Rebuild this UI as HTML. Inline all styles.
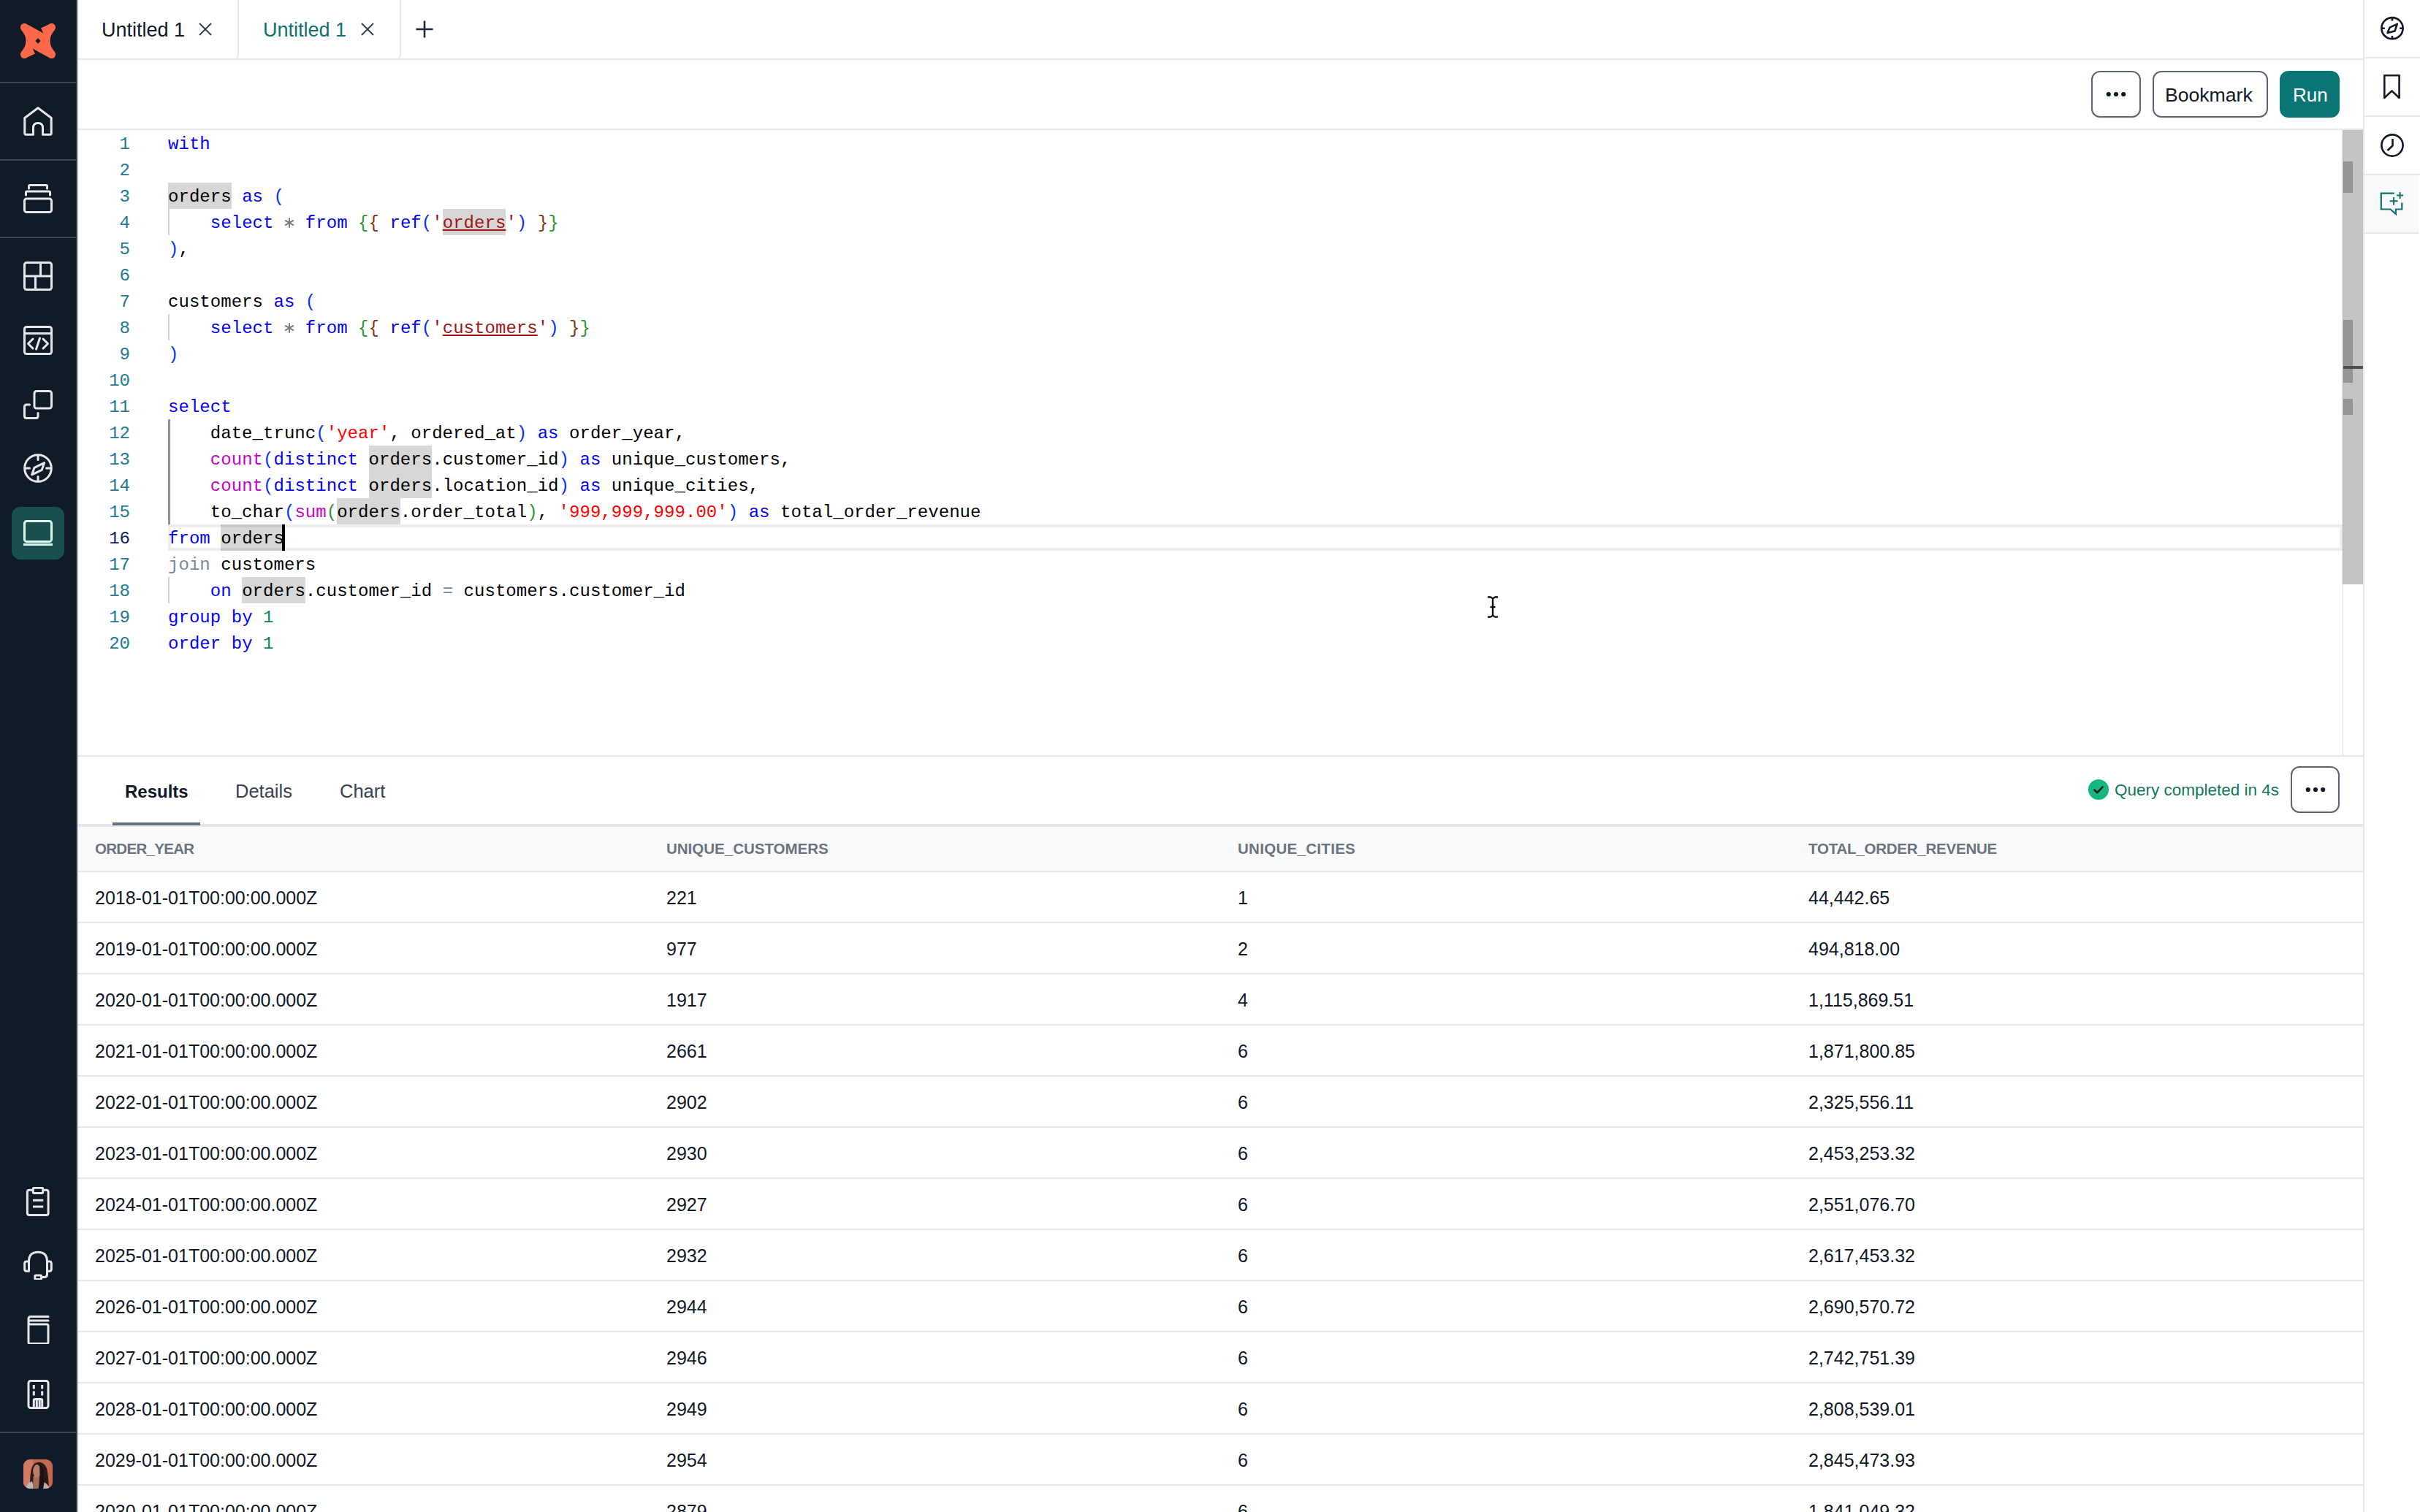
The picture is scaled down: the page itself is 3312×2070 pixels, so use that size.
<!DOCTYPE html>
<html><head><meta charset="utf-8">
<style>
*{box-sizing:border-box;margin:0;padding:0}
html,body{width:3312px;height:2070px;overflow:hidden;background:#fff;font-family:"Liberation Sans",sans-serif;position:relative}
.abs{position:absolute}
/* left sidebar */
#sb{position:absolute;left:0;top:0;width:106px;height:2070px;background:#111a27;border-right:2px solid #343f4e}
.sdiv{position:absolute;left:0;width:104px;height:2px;background:#3d4654}
.sico{position:absolute;left:32px;width:40px;height:40px}
/* top tabs */
#tabs{position:absolute;left:106px;top:0;width:3129px;height:82px;border-bottom:2px solid #e5e7eb}
.tab{position:absolute;top:0;height:82px;border-right:2px solid #e5e7eb;border-bottom-right-radius:8px}
.tabt{position:absolute;top:24px;font-size:27px;line-height:34px;white-space:nowrap}
/* toolbar */
#tool{position:absolute;left:106px;top:82px;width:3129px;height:96px;border-bottom:2px solid #e5e7eb}
.btn{position:absolute;top:15px;height:64px;border:2px solid #5b6472;border-radius:12px;background:#fff}
/* editor */
#ed{position:absolute;left:106px;top:178px;width:3129px;height:858px;border-bottom:2px solid #e5e7eb;overflow:hidden}
.ln{position:absolute;margin-top:2px;left:0;width:72px;text-align:right;font-family:"Liberation Mono",monospace;font-size:24px;line-height:36px;color:#237893}
.cl{position:absolute;margin-top:2px;left:124px;font-family:"Liberation Mono",monospace;font-size:24px;line-height:36px;color:#000;white-space:pre;letter-spacing:0.044px}
/* right sidebar */
#rsb{position:absolute;left:3234px;top:0;width:78px;height:2070px;border-left:2px solid #e5e7eb;background:#fff}
.rdiv{position:absolute;left:0;width:77px;height:2px;background:#e5e7eb}
/* results */
#rtabs{position:absolute;left:106px;top:1036px;width:3129px;height:96px;border-bottom:4px solid #e5e7eb}
.rt{position:absolute;top:32px;font-size:25.5px;line-height:30px;color:#394150;white-space:nowrap}
#table{position:absolute;left:106px;top:1132px;width:3129px;height:940px}
.th{position:absolute;top:0;left:0;width:3129px;height:62px;background:#f9fafb;border-bottom:2px solid #e5e7eb}
.row{position:absolute;left:0;width:3129px;height:70px;border-bottom:2px solid #e5e7eb}
.c{position:absolute;white-space:nowrap}
.hc{top:18px;font-size:20.5px;line-height:24px;font-weight:bold;color:#6b7280}
.dc{top:20px;font-size:25px;line-height:30px;color:#101828}
.k{color:#0000ff}.p1{color:#0431fa}.p2{color:#319331}.p3{color:#7b3814}.s{color:#ff0000}.sr{color:#a31515}.f{color:#c700c7}.o{color:#778899}.ast{color:transparent}.n{color:#098658}
.hlb{position:absolute;width:86.7px;height:36px;background:#d7d7d7}.ul{text-decoration:underline;text-decoration-color:#a31515;text-decoration-thickness:2px;text-underline-offset:2px}
.ln.act{color:#0b216f}
.curline{position:absolute;left:124px;top:540px;width:2976px;height:36px;border:4px solid rgba(0,0,0,0.067)}
.guide{position:absolute;left:124px;width:2px;background:#d3d3d3}
.guide.act{background:#939393;width:3px}
.caret{position:absolute;left:280px;top:540px;width:4px;height:36px;background:#000}
#vsb{position:absolute;left:3100px;top:0;width:28px;height:622px;background:#c4c4c4;border-left:1px solid #a9a9a9}
.mk{position:absolute;left:0;width:13px;background:#959595}
#vline{position:absolute;left:3100px;top:622px;width:1px;height:234px;background:#d9d9d9}
</style></head>
<body>
<div id="sb">
<svg class="abs" style="left:28px;top:32px" width="48" height="48" viewBox="0 0 48 48"><path fill="#ff694a" fill-rule="evenodd" d="M9.4 1.6L31.4 13.6L28 6.4L38.6 1.6A5.5 5.5 0 0 1 46.4 9.4Q34.5 24 46.4 38.6A5.5 5.5 0 0 1 38.6 46.4L16.6 34.4L20 41.6L9.4 46.4A5.5 5.5 0 0 1 1.6 38.6Q13.5 24 1.6 9.4A5.5 5.5 0 0 1 9.4 1.6Z M24 20.3L27.7 24L24 27.7L20.3 24Z"/></svg>
<div class="sdiv" style="top:112px"></div>
<div class="sdiv" style="top:218px"></div>
<div class="sdiv" style="top:324px"></div>
<svg class="sico" style="top:146px" viewBox="0 0 40 40"><path stroke="#e5e7eb" stroke-width="3" fill="none" stroke-linejoin="round" stroke-linecap="round" d="M20 1.8L38.2 15.5V36.5Q38.2 38.2 36.5 38.2H26.5V29Q26.5 22.5 20 22.5Q13.5 22.5 13.5 29V38.2H3.5Q1.8 38.2 1.8 36.5V15.5Z"/></svg>
<svg class="sico" style="top:252px" viewBox="0 0 40 40"><path stroke="#e5e7eb" stroke-width="3" fill="none" stroke-linejoin="round" stroke-linecap="round" d="M7.5 6V3Q7.5 1.5 9 1.5H31Q32.5 1.5 32.5 3V6M3.5 15V11.5Q3.5 10 5 10H35Q36.5 10 36.5 11.5V15"/><rect x="1.5" y="20" width="37" height="18.5" rx="3" stroke="#e5e7eb" stroke-width="3" fill="none" stroke-linejoin="round" stroke-linecap="round"/></svg>
<svg class="sico" style="top:358px" viewBox="0 0 40 40"><rect x="1.5" y="1.5" width="37" height="37" rx="3" stroke="#e5e7eb" stroke-width="3" fill="none" stroke-linejoin="round" stroke-linecap="round"/><path stroke="#e5e7eb" stroke-width="3" fill="none" stroke-linejoin="round" stroke-linecap="round" d="M1.5 20H38.5M23.5 1.5V20M16.5 20V38.5"/></svg>
<svg class="sico" style="top:446px" viewBox="0 0 40 40"><rect x="1.5" y="1.5" width="37" height="37" rx="3" stroke="#e5e7eb" stroke-width="3" fill="none" stroke-linejoin="round" stroke-linecap="round"/><path stroke="#e5e7eb" stroke-width="3" fill="none" stroke-linejoin="round" stroke-linecap="round" d="M1.5 10.5H38.5M13 18L6.5 24.5L13 31M27 18L33.5 24.5L27 31M22.5 17L17.5 32"/></svg>
<svg class="sico" style="top:534px" viewBox="0 0 40 40"><rect x="15" y="1.5" width="23.5" height="23.5" rx="3" stroke="#e5e7eb" stroke-width="3" fill="none" stroke-linejoin="round" stroke-linecap="round"/><path stroke="#e5e7eb" stroke-width="3" fill="none" stroke-linejoin="round" stroke-linecap="round" d="M8.5 20H4.5Q1.5 20 1.5 23V35.5Q1.5 38.5 4.5 38.5H17Q20 38.5 20 35.5V31.5"/></svg>
<svg class="sico" style="top:621px" viewBox="0 0 40 40"><circle cx="20" cy="20" r="18.3" stroke="#e5e7eb" stroke-width="3" fill="none" stroke-linejoin="round" stroke-linecap="round"/><path stroke="#e5e7eb" stroke-width="3" fill="none" stroke-linejoin="round" stroke-linecap="round" d="M20 3.5V8.5M20 31.5V36.5M3.5 20H8.5M31.5 20H36.5"/><path stroke="#e5e7eb" stroke-width="3" fill="none" stroke-linejoin="round" stroke-linecap="round" d="M11.7 28.8L15 19.3L28.6 12.6L25.3 22.3Z"/></svg>
<div class="abs" style="left:16px;top:694px;width:72px;height:72px;border-radius:12px;background:#1a4f50"></div>
<svg class="sico" style="top:709px" viewBox="0 0 40 40"><rect x="1.5" y="4.5" width="37" height="28" rx="3" stroke="#dcfcf2" stroke-width="3" fill="none"/><path d="M0 36.5H40" stroke="#dcfcf2" stroke-width="3"/></svg>
<svg class="sico" style="top:1625px" viewBox="0 0 40 40"><path stroke="#e5e7eb" stroke-width="3" fill="none" stroke-linejoin="round" stroke-linecap="round" d="M11.5 4.3H8.2Q5.4 4.3 5.4 7.1V35.7Q5.4 38.5 8.2 38.5H31.3Q34.1 38.5 34.1 35.7V7.1Q34.1 4.3 31.3 4.3H28"/><rect x="13.3" y="1.3" width="13.4" height="7.1" rx="1.5" stroke="#e5e7eb" stroke-width="3" fill="none" stroke-linejoin="round" stroke-linecap="round"/><path stroke="#e5e7eb" stroke-width="3" fill="none" d="M13 18.3H27.2M13 27.1H27.2"/></svg>
<svg class="sico" style="top:1712px" viewBox="0 0 40 40"><path stroke="#e5e7eb" stroke-width="3" fill="none" stroke-linejoin="round" stroke-linecap="round" d="M7.5 15Q7.5 2.2 20 2.2Q32.5 2.2 32.5 15V33Q32.5 36.6 28.5 36.6H24.6"/><path stroke="#e5e7eb" stroke-width="3" fill="none" stroke-linejoin="round" stroke-linecap="round" d="M7.5 14.9H4.5Q1.7 14.9 1.7 17.7V25.5Q1.7 28.3 4.5 28.3H7.5Z M32.5 14.9H35.5Q38.3 14.9 38.3 17.7V25.5Q38.3 28.3 35.5 28.3H32.5Z"/><rect x="15.8" y="33.9" width="8.8" height="5.5" rx="1.2" stroke="#e5e7eb" stroke-width="3" fill="none" stroke-linejoin="round" stroke-linecap="round"/></svg>
<svg class="sico" style="top:1800px" viewBox="0 0 40 40"><path stroke="#e5e7eb" stroke-width="3" fill="none" stroke-linejoin="round" stroke-linecap="round" d="M34 2.5H10Q7 2.5 7 5.5V37.5Q7 39.5 9.5 39.5H31.5Q34 39.5 34 37.5V15Q34 13 32 13H9.5Q7 13 7 10.5Q7 8 9.5 8H34"/></svg>
<svg class="sico" style="top:1889px" viewBox="0 0 40 40"><rect x="7" y="1.5" width="27" height="37" rx="3" stroke="#e5e7eb" stroke-width="3" fill="none" stroke-linejoin="round" stroke-linecap="round"/><path stroke="#e5e7eb" stroke-width="3" fill="none" d="M14.3 7V12.5M25.7 7V12.5M14.3 15.5V21.5M25.7 15.5V21.5"/><path stroke="#e5e7eb" stroke-width="3" fill="none" stroke-linejoin="round" stroke-linecap="round" d="M14.3 38.5V28Q14.3 26.5 15.8 26.5H24.2Q25.7 26.5 25.7 28V38.5M18.3 27V38.5M22.2 27V38.5"/></svg>
<div class="sdiv" style="top:1960px"></div>
<svg class="abs" style="left:32px;top:1998px" width="40" height="40" viewBox="0 0 40 40"><defs><clipPath id="av"><rect width="40" height="40" rx="9"/></clipPath></defs><g clip-path="url(#av)"><rect width="40" height="40" fill="#c66850"/><rect x="0" y="0" width="13" height="40" fill="#d47a64"/><path d="M9.5 40Q8 22 12 10Q16 3 22 3.8Q30 5 32.5 14Q34.5 26 35 40Z" fill="#2a1916"/><path d="M3 40Q5 32 12 30L14.5 40Z" fill="#b9b9b9"/><path d="M24 40L26 31Q33 32 36 40Z" fill="#b3b3b3"/><path d="M13.5 23L22 23L21 40L13 40Z" fill="#a66d5b"/><ellipse cx="18.5" cy="16" rx="5.4" ry="9" fill="#b97c69"/><path d="M22 7Q29 11 28 23Q29 34 27 40L20.5 40Q24.5 30 22.5 20Z" fill="#1e1312"/></g></svg>
</div>
<div id="tabs">
<div class="tab" style="left:0;width:221px"><div class="tabt" style="left:33px;color:#111827">Untitled 1</div>
<svg class="abs" style="left:164px;top:29px" width="22" height="22" viewBox="0 0 22 22"><path d="M3 3L19 19M19 3L3 19" stroke="#374151" stroke-width="2" fill="none"/></svg></div>
<div class="tab" style="left:221px;width:222px"><div class="tabt" style="left:33px;color:#0f6f73">Untitled 1</div>
<svg class="abs" style="left:165px;top:29px" width="22" height="22" viewBox="0 0 22 22"><path d="M3 3L19 19M19 3L3 19" stroke="#374151" stroke-width="2" fill="none"/></svg></div>
<svg class="abs" style="left:462px;top:27px" width="26" height="26" viewBox="0 0 26 26"><path d="M13 1.5V24.5M1.5 13H24.5" stroke="#1f2937" stroke-width="2.6" fill="none"/></svg>
</div>
<div id="tool">
<div class="btn" style="left:2756px;width:68px"><svg class="abs" style="left:18px;top:24px" width="28" height="12" viewBox="0 0 28 12"><circle cx="3.8" cy="6" r="3.1" fill="#111827"/><circle cx="14" cy="6" r="3.1" fill="#111827"/><circle cx="24.2" cy="6" r="3.1" fill="#111827"/></svg></div>
<div class="btn" style="left:2840px;width:158px"><div class="abs" style="left:15px;top:15.5px;font-size:26.6px;line-height:30px;color:#111827">Bookmark</div></div>
<div class="btn" style="left:3014px;width:82px;background:#0b7477;border-color:#0b7477"><div class="abs" style="left:16px;top:16px;font-size:26px;line-height:30px;color:#fff">Run</div></div>
</div>
<div id="ed">
<div class="hlb" style="left:124.0px;top:72px"></div><div class="hlb" style="left:499.7px;top:108px"></div><div class="hlb" style="left:398.6px;top:432px"></div><div class="hlb" style="left:398.6px;top:468px"></div><div class="hlb" style="left:355.2px;top:504px"></div><div class="hlb" style="left:196.2px;top:540px"></div><div class="hlb" style="left:225.1px;top:612px"></div>
<div class="guide" style="top:108px;height:36px"></div>
<div class="guide" style="top:252px;height:36px"></div>
<div class="guide act" style="top:396px;height:144px"></div>
<div class="guide" style="top:612px;height:36px"></div>
<div class="ln" style="top:0px">1</div>
<div class="ln" style="top:36px">2</div>
<div class="ln" style="top:72px">3</div>
<div class="ln" style="top:108px">4</div>
<div class="ln" style="top:144px">5</div>
<div class="ln" style="top:180px">6</div>
<div class="ln" style="top:216px">7</div>
<div class="ln" style="top:252px">8</div>
<div class="ln" style="top:288px">9</div>
<div class="ln" style="top:324px">10</div>
<div class="ln" style="top:360px">11</div>
<div class="ln" style="top:396px">12</div>
<div class="ln" style="top:432px">13</div>
<div class="ln" style="top:468px">14</div>
<div class="ln" style="top:504px">15</div>
<div class="ln act" style="top:540px">16</div>
<div class="ln" style="top:576px">17</div>
<div class="ln" style="top:612px">18</div>
<div class="ln" style="top:648px">19</div>
<div class="ln" style="top:684px">20</div>
<div class="cl" style="top:0px"><span class="k">with</span></div>
<div class="cl" style="top:72px">orders <span class="k">as</span> <span class="p1">(</span></div>
<div class="cl" style="top:108px">    <span class="k">select</span> <span class="o ast">*</span> <span class="k">from</span> <span class="p2">{</span><span class="p3">{</span> <span class="k">ref</span><span class="p1">(</span><span class="sr">'</span><span class="sr ul">orders</span><span class="sr">'</span><span class="p1">)</span> <span class="p3">}</span><span class="p2">}</span></div>
<div class="cl" style="top:144px"><span class="p1">)</span>,</div>
<div class="cl" style="top:216px">customers <span class="k">as</span> <span class="p1">(</span></div>
<div class="cl" style="top:252px">    <span class="k">select</span> <span class="o ast">*</span> <span class="k">from</span> <span class="p2">{</span><span class="p3">{</span> <span class="k">ref</span><span class="p1">(</span><span class="sr">'</span><span class="sr ul">customers</span><span class="sr">'</span><span class="p1">)</span> <span class="p3">}</span><span class="p2">}</span></div>
<div class="cl" style="top:288px"><span class="p1">)</span></div>
<div class="cl" style="top:360px"><span class="k">select</span></div>
<div class="cl" style="top:396px">    date_trunc<span class="p1">(</span><span class="s">'year'</span>, ordered_at<span class="p1">)</span> <span class="k">as</span> order_year,</div>
<div class="cl" style="top:432px">    <span class="f">count</span><span class="p1">(</span><span class="k">distinct</span> orders.customer_id<span class="p1">)</span> <span class="k">as</span> unique_customers,</div>
<div class="cl" style="top:468px">    <span class="f">count</span><span class="p1">(</span><span class="k">distinct</span> orders.location_id<span class="p1">)</span> <span class="k">as</span> unique_cities,</div>
<div class="cl" style="top:504px">    to_char<span class="p1">(</span><span class="f">sum</span><span class="p2">(</span>orders.order_total<span class="p2">)</span>, <span class="s">'999,999,999.00'</span><span class="p1">)</span> <span class="k">as</span> total_order_revenue</div>
<div class="cl" style="top:540px"><span class="k">from</span> orders</div>
<div class="cl" style="top:576px"><span class="o">join</span> customers</div>
<div class="cl" style="top:612px">    <span class="k">on</span> orders.customer_id <span class="o">=</span> customers.customer_id</div>
<div class="cl" style="top:648px"><span class="k">group</span> <span class="k">by</span> <span class="n">1</span></div>
<div class="cl" style="top:684px"><span class="k">order</span> <span class="k">by</span> <span class="n">1</span></div>
<div class="curline"></div>
<svg class="abs" style="left:282.3px;top:118.5px" width="16" height="16" viewBox="0 0 16 16"><path d="M8 1.2V14.8M2.1 4.6L13.9 11.4M2.1 11.4L13.9 4.6" stroke="#6f7b89" stroke-width="1.9" fill="none"/></svg><svg class="abs" style="left:282.3px;top:262.5px" width="16" height="16" viewBox="0 0 16 16"><path d="M8 1.2V14.8M2.1 4.6L13.9 11.4M2.1 11.4L13.9 4.6" stroke="#6f7b89" stroke-width="1.9" fill="none"/></svg>
<div class="caret"></div>
<div id="vsb"><div class="mk" style="top:43px;height:43px"></div><div class="mk" style="top:260px;height:86px"></div><div class="abs" style="left:0;top:323px;width:27px;height:4px;background:#4f4f4f"></div><div class="mk" style="top:368px;height:22px"></div></div><div id="vline"></div>
<svg class="abs" style="left:1929px;top:636px" width="16" height="34" viewBox="0 0 16 34"><path d="M2 3.5Q5 2.5 8 5.5Q11 2.5 14 3.5M8 5.5V28.5M2 30.5Q5 31.5 8 28.5Q11 31.5 14 30.5M5.5 17H10.5" stroke="#111" stroke-width="2.4" fill="none" stroke-linecap="round"/></svg>
</div>
<div id="rtabs">
<div class="rt" style="left:65px;top:33px;font-weight:bold;color:#111827;font-size:24px">Results</div>
<div class="rt" style="left:216px">Details</div>
<div class="rt" style="left:359px">Chart</div>
<div class="abs" style="left:48px;top:90px;width:120px;height:4px;background:#667080"></div>
<svg class="abs" style="left:2752px;top:31px" width="28" height="28" viewBox="0 0 28 28"><circle cx="14" cy="14" r="14" fill="#16b67f"/><path d="M8.5 14.5L12.3 18.2L19.5 10.5" stroke="#111827" stroke-width="2.6" fill="none" stroke-linecap="round" stroke-linejoin="round"/></svg>
<div class="abs" style="left:2788px;top:33px;font-size:22.5px;line-height:26px;color:#127759;white-space:nowrap">Query completed in 4s</div>
<div class="btn" style="left:3029px;top:13px;width:67px"><svg class="abs" style="left:18px;top:24px" width="28" height="12" viewBox="0 0 28 12"><circle cx="3.8" cy="6" r="3.1" fill="#111827"/><circle cx="14" cy="6" r="3.1" fill="#111827"/><circle cx="24.2" cy="6" r="3.1" fill="#111827"/></svg></div>
</div>
<div id="table">
<div class="th"><div class="c hc" style="left:24px;letter-spacing:-0.7px">ORDER_YEAR</div><div class="c hc" style="left:806px">UNIQUE_CUSTOMERS</div><div class="c hc" style="left:1588px;letter-spacing:0.3px">UNIQUE_CITIES</div><div class="c hc" style="left:2369px;letter-spacing:-0.23px">TOTAL_ORDER_REVENUE</div></div>
<div class="row" style="top:62px"><div class="c dc" style="left:24px">2018-01-01T00:00:00.000Z</div><div class="c dc" style="left:806px">221</div><div class="c dc" style="left:1588px">1</div><div class="c dc" style="left:2369px">44,442.65</div></div>
<div class="row" style="top:132px"><div class="c dc" style="left:24px">2019-01-01T00:00:00.000Z</div><div class="c dc" style="left:806px">977</div><div class="c dc" style="left:1588px">2</div><div class="c dc" style="left:2369px">494,818.00</div></div>
<div class="row" style="top:202px"><div class="c dc" style="left:24px">2020-01-01T00:00:00.000Z</div><div class="c dc" style="left:806px">1917</div><div class="c dc" style="left:1588px">4</div><div class="c dc" style="left:2369px">1,115,869.51</div></div>
<div class="row" style="top:272px"><div class="c dc" style="left:24px">2021-01-01T00:00:00.000Z</div><div class="c dc" style="left:806px">2661</div><div class="c dc" style="left:1588px">6</div><div class="c dc" style="left:2369px">1,871,800.85</div></div>
<div class="row" style="top:342px"><div class="c dc" style="left:24px">2022-01-01T00:00:00.000Z</div><div class="c dc" style="left:806px">2902</div><div class="c dc" style="left:1588px">6</div><div class="c dc" style="left:2369px">2,325,556.11</div></div>
<div class="row" style="top:412px"><div class="c dc" style="left:24px">2023-01-01T00:00:00.000Z</div><div class="c dc" style="left:806px">2930</div><div class="c dc" style="left:1588px">6</div><div class="c dc" style="left:2369px">2,453,253.32</div></div>
<div class="row" style="top:482px"><div class="c dc" style="left:24px">2024-01-01T00:00:00.000Z</div><div class="c dc" style="left:806px">2927</div><div class="c dc" style="left:1588px">6</div><div class="c dc" style="left:2369px">2,551,076.70</div></div>
<div class="row" style="top:552px"><div class="c dc" style="left:24px">2025-01-01T00:00:00.000Z</div><div class="c dc" style="left:806px">2932</div><div class="c dc" style="left:1588px">6</div><div class="c dc" style="left:2369px">2,617,453.32</div></div>
<div class="row" style="top:622px"><div class="c dc" style="left:24px">2026-01-01T00:00:00.000Z</div><div class="c dc" style="left:806px">2944</div><div class="c dc" style="left:1588px">6</div><div class="c dc" style="left:2369px">2,690,570.72</div></div>
<div class="row" style="top:692px"><div class="c dc" style="left:24px">2027-01-01T00:00:00.000Z</div><div class="c dc" style="left:806px">2946</div><div class="c dc" style="left:1588px">6</div><div class="c dc" style="left:2369px">2,742,751.39</div></div>
<div class="row" style="top:762px"><div class="c dc" style="left:24px">2028-01-01T00:00:00.000Z</div><div class="c dc" style="left:806px">2949</div><div class="c dc" style="left:1588px">6</div><div class="c dc" style="left:2369px">2,808,539.01</div></div>
<div class="row" style="top:832px"><div class="c dc" style="left:24px">2029-01-01T00:00:00.000Z</div><div class="c dc" style="left:806px">2954</div><div class="c dc" style="left:1588px">6</div><div class="c dc" style="left:2369px">2,845,473.93</div></div>
<div class="row" style="top:902px"><div class="c dc" style="left:24px">2030-01-01T00:00:00.000Z</div><div class="c dc" style="left:806px">2879</div><div class="c dc" style="left:1588px">6</div><div class="c dc" style="left:2369px">1,841,049.32</div></div>
</div>
<div id="rsb">
<div class="rdiv" style="top:78px"></div>
<div class="rdiv" style="top:158px"></div>
<div class="rdiv" style="top:238px"></div>
<div class="abs" style="left:0;top:240px;width:74px;height:80px;background:#f9fafb;border-bottom:2px solid #e5e7eb"></div>
<svg class="abs" style="left:20px;top:21px" width="36" height="36" viewBox="0 0 36 36"><circle cx="18" cy="17.7" r="14.6" stroke="#111827" stroke-width="2.6" fill="none" stroke-linejoin="round"/><path stroke="#111827" stroke-width="2.6" fill="none" stroke-linejoin="round" d="M18 3V7.5M18 28V32.5M3.3 17.7H7.8M28.2 17.7H32.7"/><path stroke="#111827" stroke-width="2.6" fill="none" stroke-linejoin="round" d="M11.5 24L14.7 16.6L24.8 11.8L21.6 21.4Z"/></svg>
<svg class="abs" style="left:24px;top:101px" width="28" height="36" viewBox="0 0 28 36"><path stroke="#111827" stroke-width="2.6" fill="none" stroke-linejoin="round" d="M3.3 2.3H23.6V33L13.45 23.4L3.3 33Z"/></svg>
<svg class="abs" style="left:20px;top:181px" width="36" height="36" viewBox="0 0 36 36"><circle cx="18" cy="18" r="14.6" stroke="#111827" stroke-width="2.6" fill="none" stroke-linejoin="round"/><path stroke="#111827" stroke-width="2.6" fill="none" stroke-linejoin="round" d="M18.5 9V18.5L11.5 25"/></svg>
<svg class="abs" style="left:19px;top:258px" width="38" height="40" viewBox="0 0 38 40"><path stroke="#0f6f73" stroke-width="2.2" fill="none" d="M21.7 6.7H3.8V28.5H16.5L23.9 35V28.5H32.3V19.5"/><path stroke="#0f6f73" stroke-width="2" fill="none" d="M21.1 11.9V22.7M15.7 17.3H26.5M29.6 4.9V13.9M25.1 9.4H34.1"/></svg>
</div>
</body></html>
